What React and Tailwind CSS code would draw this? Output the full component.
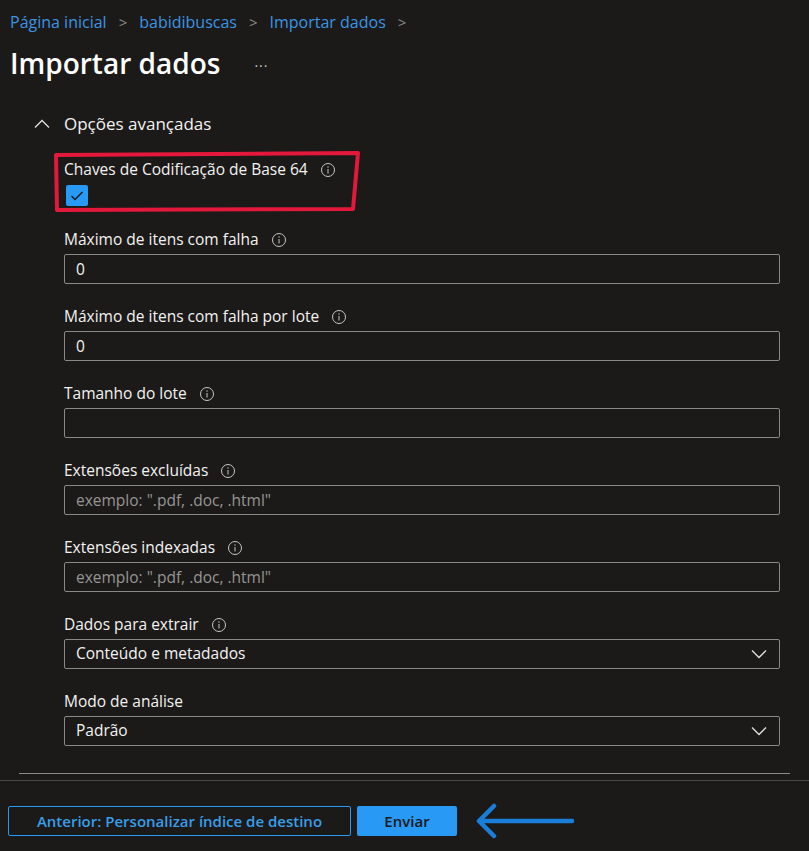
import { useState } from "react";

function InfoIcon() {
  return (
    <svg width="16" height="16" viewBox="0 0 16 16" fill="none" className="shrink-0">
      <circle cx="8" cy="8" r="6.5" stroke="#c8c6c4" strokeWidth="1" />
      <line x1="8" y1="7" x2="8" y2="11.5" stroke="#c8c6c4" strokeWidth="1" />
      <circle cx="8" cy="5" r="0.7" fill="#c8c6c4" />
    </svg>
  );
}

function Chevron() {
  return (
    <svg width="16" height="10" viewBox="0 0 16 10" fill="none">
      <path d="M1 1.5 L8 8.5 L15 1.5" stroke="#e1dfdd" strokeWidth="1.3" />
    </svg>
  );
}

function Label({ children }) {
  return (
    <div className="flex items-center gap-[12px] h-[20px] text-[15.5px] text-[#f3f2f1]">
      <span>{children}</span>
      <InfoIcon />
    </div>
  );
}

function TextField({ label, value, placeholder, info = true }) {
  const [val, setVal] = useState(value || "");
  return (
    <div className="mt-[23px] first:mt-0">
      {info ? (
        <Label>{label}</Label>
      ) : (
        <div className="flex items-center h-[20px] text-[15.5px] text-[#f3f2f1]">{label}</div>
      )}
      <input
        value={val}
        onChange={(e) => setVal(e.target.value)}
        placeholder={placeholder}
        className="mt-[4px] block w-full h-[30px] rounded-[2px] border border-[#8a8886] bg-transparent px-[11px] text-[15.5px] text-[#f3f2f1] placeholder:text-[#979593] outline-none"
      />
    </div>
  );
}

function SelectField({ label, value, info = true }) {
  return (
    <div className="mt-[23px]">
      {info ? (
        <Label>{label}</Label>
      ) : (
        <div className="flex items-center h-[20px] text-[15.5px] text-[#f3f2f1]">{label}</div>
      )}
      <div className="mt-[4px] flex items-center justify-between w-full h-[30px] rounded-[2px] border border-[#8a8886] pl-[11px] pr-[12px] text-[15.5px] text-[#f3f2f1]">
        <span>{value}</span>
        <Chevron />
      </div>
    </div>
  );
}

export default function App() {
  return (
    <div
      className="w-[809px] h-[851px] overflow-hidden bg-[#1b1a19] text-[#f3f2f1]"
      style={{ fontFamily: '"Open Sans", "Noto Sans", sans-serif' }}
    >
      <div className="pl-[10px] pt-[15px] flex items-center gap-[12px] text-[16px] text-[#3b94e3] h-[29px]">
        <span>Página inicial</span>
        <span className="text-[#8a8886] text-[15px]">&gt;</span>
        <span>babidibuscas</span>
        <span className="text-[#8a8886] text-[15px]">&gt;</span>
        <span>Importar dados</span>
        <span className="text-[#8a8886] text-[15px]">&gt;</span>
      </div>

      <div className="pl-[10px] mt-[17px] flex items-center h-[34px]">
        <h1 className="text-[28px] font-semibold text-white">Importar dados</h1>
        <span className="ml-[34px] text-[14px] text-[#c8c6c4] tracking-[1px] -mt-[4px]">...</span>
      </div>

      <div className="mt-[32px] pl-[34px] flex items-center gap-[14px] h-[24px]">
        <svg width="16" height="10" viewBox="0 0 16 10" fill="none">
          <path d="M1 8.5 L8 1.5 L15 8.5" stroke="#e1dfdd" strokeWidth="1.3" />
        </svg>
        <span className="text-[17px] text-[#f3f2f1]">Opções avançadas</span>
      </div>

      <div className="pl-[64px] pr-[29px] mt-[24px]">
        <div className="relative">
          <Label>Chaves de Codificação de Base 64</Label>
          <div className="mt-[5px] ml-[2px] w-[22px] h-[21px] rounded-[2px] bg-[#2899f5] flex items-center justify-center">
            <svg width="14" height="10" viewBox="0 0 14 10" fill="none">
              <path d="M1.5 5 L5 8.5 L12.5 1" stroke="#1b1a19" strokeWidth="1.4" />
            </svg>
          </div>
          <svg
            className="absolute -left-[11px] -top-[9px] pointer-events-none"
            width="312"
            height="64"
            viewBox="0 0 312 64"
            fill="none"
          >
            <path
              d="M3 4 L305 2 L300 58 L4 59 Z"
              stroke="#e3183a"
              strokeWidth="4"
              strokeLinejoin="round"
            />
          </svg>
        </div>

        <div className="mt-[24px]">
          <TextField label="Máximo de itens com falha" value="0" />
          <TextField label="Máximo de itens com falha por lote" value="0" />
          <TextField label="Tamanho do lote" value="" />
          <TextField label="Extensões excluídas" placeholder='exemplo: ".pdf, .doc, .html"' />
          <TextField label="Extensões indexadas" placeholder='exemplo: ".pdf, .doc, .html"' />
          <SelectField label="Dados para extrair" value="Conteúdo e metadados" />
          <SelectField label="Modo de análise" value="Padrão" info={false} />
        </div>
      </div>

      <div className="mt-[27px] ml-[19px] mr-[19px] h-px bg-[#8a8886]" />
      <div className="mt-[6px] h-px bg-[#484644]" />

      <div className="mt-[22px] pl-[8px] flex items-center gap-[6px]">
        <button className="h-[30px] w-[343px] rounded-[2px] border border-[#2899f5] text-[15px] font-semibold text-[#3a9de8]">
          Anterior: Personalizar índice de destino
        </button>
        <button className="h-[30px] w-[100px] rounded-[2px] bg-[#2899f5] text-[15px] font-semibold text-[#1b1a19]">
          Enviar
        </button>
        <svg className="ml-[12px]" width="100" height="36" viewBox="0 0 100 36" fill="none">
          <path
            d="M4 18 L97 18 M4 18 L19 3 M4 18 L19 33"
            stroke="#1a7ed8"
            strokeWidth="4.5"
            strokeLinecap="round"
            strokeLinejoin="round"
          />
        </svg>
      </div>
    </div>
  );
}
